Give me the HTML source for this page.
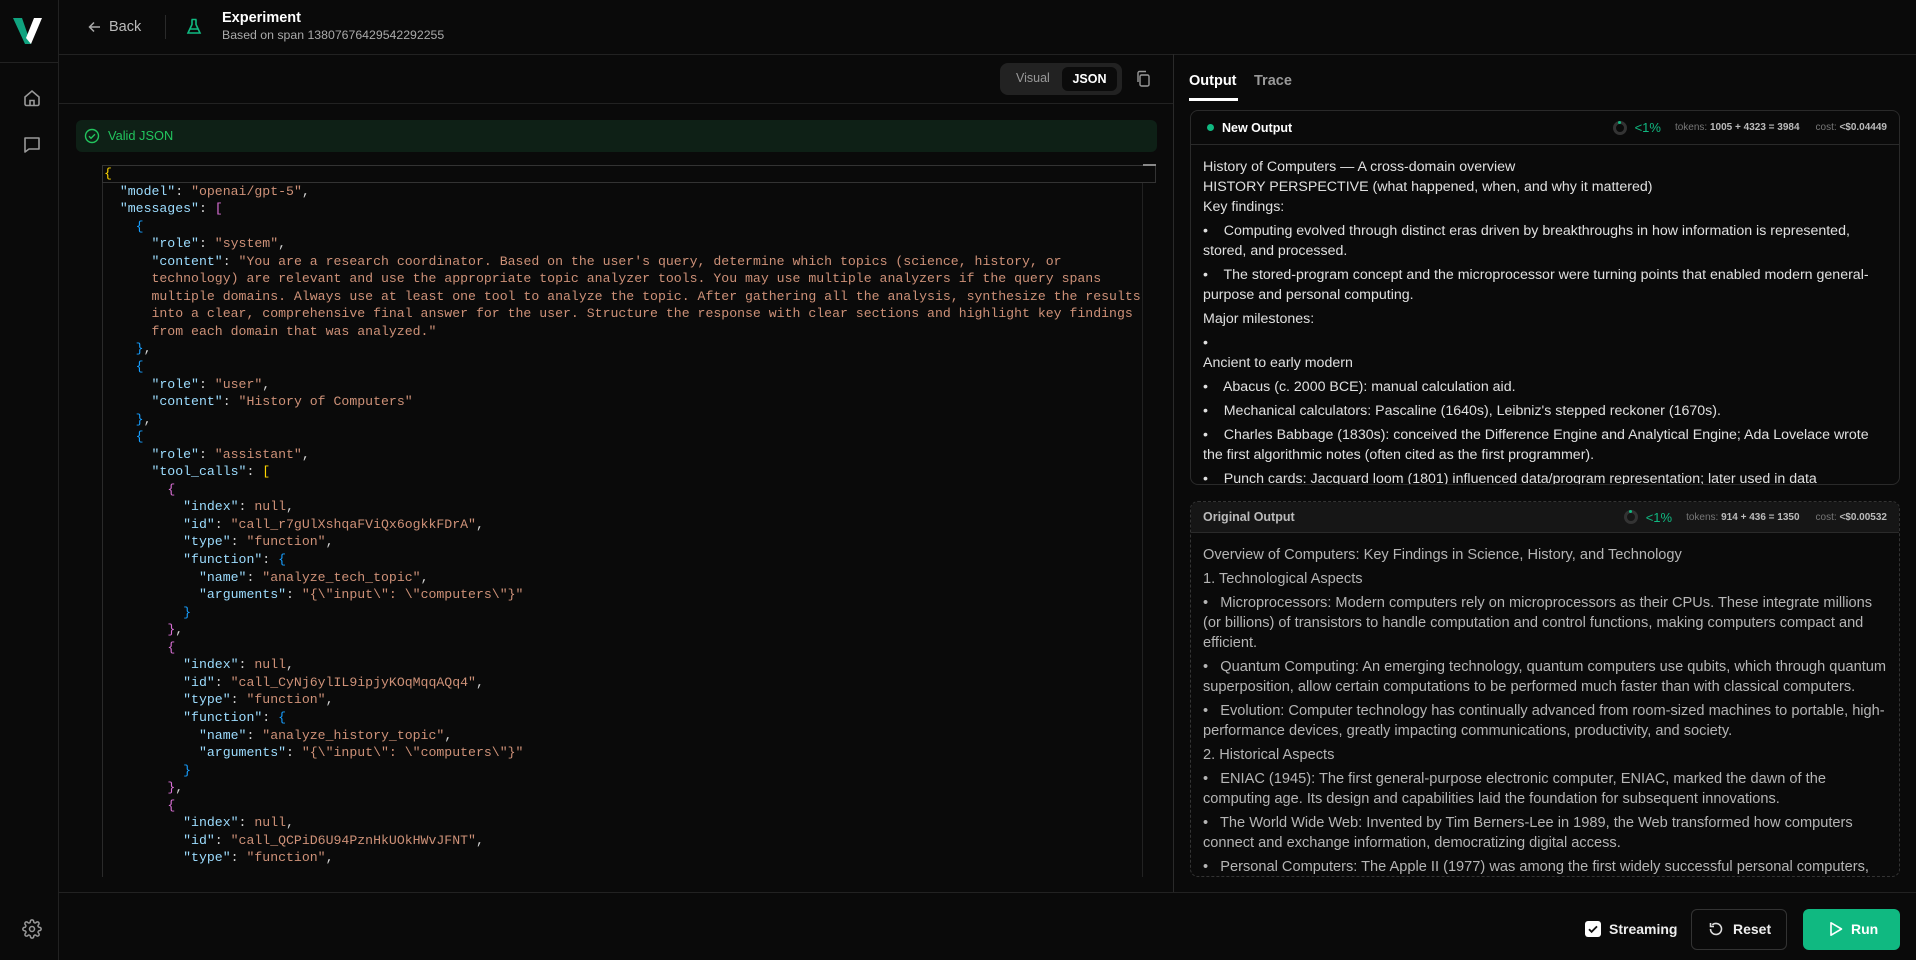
<!DOCTYPE html>
<html><head><meta charset="utf-8"><style>
*{box-sizing:border-box;margin:0;padding:0}
body{width:1916px;height:960px;background:#0a0a0a;color:#e5e5e5;font-family:"Liberation Sans",sans-serif;position:relative;overflow:hidden}
.abs{position:absolute}
.code{position:absolute;left:104px;top:165px;font-family:"Liberation Mono",monospace;font-size:13.2px;line-height:17.55px;white-space:pre;color:#d4d4d4}
.k{color:#9cdcfe}.s{color:#ce9178}.y{color:#ffd700}.p{color:#da70d6}.b{color:#179fff}
.card{position:absolute;left:1190px;width:710px;border:1px solid #2a2a2a;border-radius:8px;overflow:hidden}
.ch{height:34px;border-bottom:1px solid #2a2a2a;display:flex;align-items:center;padding:0 12px;font-size:12.5px}
.body{padding:12px 12px;font-size:14.2px;line-height:20px;color:#e0e0e0}
.body p{margin-bottom:4px}
.meta{margin-left:auto;display:flex;align-items:center;gap:8px;font-size:10px;color:#777}
.meta b{color:#bbb;font-weight:bold}
.ring{width:14px;height:14px;border-radius:50%;border:3px solid #333;position:relative}
.ring:after{content:"";position:absolute;width:3px;height:3px;background:#10b981;border-radius:50%;top:-3px;left:2.5px}
.pct{color:#10b981;font-size:13px;margin-right:6px}
</style></head><body>
<div class="abs" style="left:0;top:0;width:59px;height:960px;border-right:1px solid #222"></div>
<div class="abs" style="left:0;top:62px;width:59px;border-top:1px solid #222"></div>
<svg class="abs" style="left:12px;top:17px" width="32" height="28" viewBox="0 0 32 28"><polygon points="1,1 10,1 19,27 13,27" fill="#10a37f"/><polygon points="22,1 30,1 19,27 14,21" fill="#fff"/></svg>
<svg class="abs" style="left:22px;top:88px" width="20" height="20" viewBox="0 0 20 20" fill="none" stroke="#999" stroke-width="1.6"><path d="M3 9L10 3l7 6v7a1.5 1.5 0 0 1-1.5 1.5h-11A1.5 1.5 0 0 1 3 16z"/><path d="M8 17.5v-5h4v5"/></svg>
<svg class="abs" style="left:22px;top:135px" width="20" height="20" viewBox="0 0 20 20" fill="none" stroke="#999" stroke-width="1.6"><path d="M3 3h14v11H7l-4 3z" stroke-linejoin="round"/></svg>
<svg class="abs" style="left:22px;top:919px" width="20" height="20" viewBox="0 0 24 24" fill="none" stroke="#999" stroke-width="1.8"><circle cx="12" cy="12" r="3"/><path d="M19.4 15a1.7 1.7 0 0 0 .3 1.8l.1.1a2 2 0 1 1-2.8 2.8l-.1-.1a1.7 1.7 0 0 0-1.8-.3 1.7 1.7 0 0 0-1 1.5V21a2 2 0 1 1-4 0v-.1a1.7 1.7 0 0 0-1.1-1.5 1.7 1.7 0 0 0-1.8.3l-.1.1a2 2 0 1 1-2.8-2.8l.1-.1a1.7 1.7 0 0 0 .3-1.8 1.7 1.7 0 0 0-1.5-1H3a2 2 0 1 1 0-4h.1a1.7 1.7 0 0 0 1.5-1.1 1.7 1.7 0 0 0-.3-1.8l-.1-.1a2 2 0 1 1 2.8-2.8l.1.1a1.7 1.7 0 0 0 1.8.3H9a1.7 1.7 0 0 0 1-1.5V3a2 2 0 1 1 4 0v.1a1.7 1.7 0 0 0 1 1.5 1.7 1.7 0 0 0 1.8-.3l.1-.1a2 2 0 1 1 2.8 2.8l-.1.1a1.7 1.7 0 0 0-.3 1.8V9a1.7 1.7 0 0 0 1.5 1H21a2 2 0 1 1 0 4h-.1a1.7 1.7 0 0 0-1.5 1z"/></svg>
<div class="abs" style="left:59px;top:54px;width:1857px;border-top:1px solid #222"></div>
<svg class="abs" style="left:88px;top:20px" width="14" height="14" viewBox="0 0 14 14" fill="none" stroke="#aaa" stroke-width="1.5"><path d="M12 7H2M6 2.5L1.5 7 6 11.5"/></svg>
<div class="abs" style="left:109px;top:19px;font-size:14.5px;color:#bbb">Back</div>
<div class="abs" style="left:165px;top:15px;height:24px;border-left:1px solid #2a2a2a"></div>
<svg class="abs" style="left:186px;top:18px" width="16" height="17" viewBox="0 0 16 17" fill="none" stroke="#10b981" stroke-width="1.6"><path d="M5.5 1.5h5M6 1.5v5L2 15h12l-4-8.5v-5M3.8 11h8.4"/></svg>
<div class="abs" style="left:222px;top:10px;font-size:14.5px;font-weight:bold;color:#fff">Experiment</div>
<div class="abs" style="left:222px;top:28px;font-size:12.3px;color:#aaa">Based on span 13807676429542292255</div>
<div class="abs" style="left:59px;top:103px;width:1114px;border-top:1px solid #222"></div>
<div class="abs" style="left:1173px;top:54px;height:838px;border-left:1px solid #2a2a2a"></div>
<div class="abs" style="left:1000px;top:63px;width:122px;height:32px;background:#222;border-radius:8px"></div>
<div class="abs" style="left:1016px;top:71px;font-size:12.5px;color:#999">Visual</div>
<div class="abs" style="left:1062px;top:67px;width:55px;height:24px;background:#0b0b0b;border-radius:6px;font-size:12.5px;font-weight:bold;color:#fff;text-align:center;line-height:24px">JSON</div>
<svg class="abs" style="left:1135px;top:70px" width="16" height="18" viewBox="0 0 16 18" fill="none" stroke="#999" stroke-width="1.4"><rect x="5" y="5" width="9" height="11" rx="1.5"/><path d="M3 12V3a1.5 1.5 0 0 1 1.5-1.5H11"/></svg>
<div class="abs" style="left:76px;top:120px;width:1081px;height:32px;background:#0e2016;border-radius:6px"></div>
<svg class="abs" style="left:84px;top:128px" width="16" height="16" viewBox="0 0 16 16" fill="none" stroke="#22c55e" stroke-width="1.4"><circle cx="8" cy="8" r="6.5"/><path d="M5 8.2l2 2 4-4"/></svg>
<div class="abs" style="left:108px;top:128px;font-size:12.8px;color:#22c55e">Valid JSON</div>
<div class="abs" style="left:102px;top:165px;width:1054px;height:18px;border:1.5px solid #333"></div>
<div class="abs" style="left:1143px;top:164px;width:13px;border-top:2px solid #888"></div>
<div class="abs" style="left:1142px;top:183px;height:694px;border-left:1px solid #222"></div>
<div class="abs" style="left:102px;top:183px;height:694px;border-left:1px solid #2a2a2a"></div>
<div class="abs" style="left:0;top:0;width:1140px;height:877px;overflow:hidden">
<div class="code"><span class="y">{</span>
  <span class="k">"model"</span>: <span class="s">"openai/gpt-5"</span>,
  <span class="k">"messages"</span>: <span class="p">[</span>
    <span class="b">{</span>
      <span class="k">"role"</span>: <span class="s">"system"</span>,
      <span class="k">"content"</span>: <span class="s">"You are a research coordinator. Based on the user's query, determine which topics (science, history, or</span>
<span class="s">      technology) are relevant and use the appropriate topic analyzer tools. You may use multiple analyzers if the query spans</span>
<span class="s">      multiple domains. Always use at least one tool to analyze the topic. After gathering all the analysis, synthesize the results</span>
<span class="s">      into a clear, comprehensive final answer for the user. Structure the response with clear sections and highlight key findings</span>
<span class="s">      from each domain that was analyzed."</span>
    <span class="b">}</span>,
    <span class="b">{</span>
      <span class="k">"role"</span>: <span class="s">"user"</span>,
      <span class="k">"content"</span>: <span class="s">"History of Computers"</span>
    <span class="b">}</span>,
    <span class="b">{</span>
      <span class="k">"role"</span>: <span class="s">"assistant"</span>,
      <span class="k">"tool_calls"</span>: <span class="y">[</span>
        <span class="p">{</span>
          <span class="k">"index"</span>: <span class="s">null</span>,
          <span class="k">"id"</span>: <span class="s">"call_r7gUlXshqaFViQx6ogkkFDrA"</span>,
          <span class="k">"type"</span>: <span class="s">"function"</span>,
          <span class="k">"function"</span>: <span class="b">{</span>
            <span class="k">"name"</span>: <span class="s">"analyze_tech_topic"</span>,
            <span class="k">"arguments"</span>: <span class="s">"{\"input\": \"computers\"}"</span>
          <span class="b">}</span>
        <span class="p">}</span>,
        <span class="p">{</span>
          <span class="k">"index"</span>: <span class="s">null</span>,
          <span class="k">"id"</span>: <span class="s">"call_CyNj6ylIL9ipjyKOqMqqAQq4"</span>,
          <span class="k">"type"</span>: <span class="s">"function"</span>,
          <span class="k">"function"</span>: <span class="b">{</span>
            <span class="k">"name"</span>: <span class="s">"analyze_history_topic"</span>,
            <span class="k">"arguments"</span>: <span class="s">"{\"input\": \"computers\"}"</span>
          <span class="b">}</span>
        <span class="p">}</span>,
        <span class="p">{</span>
          <span class="k">"index"</span>: <span class="s">null</span>,
          <span class="k">"id"</span>: <span class="s">"call_QCPiD6U94PznHkUOkHWvJFNT"</span>,
          <span class="k">"type"</span>: <span class="s">"function"</span>,
</div></div>
<div class="abs" style="left:1189px;top:73px;font-size:14.5px;font-weight:bold;color:#fff">Output</div>
<div class="abs" style="left:1254px;top:73px;font-size:14.5px;font-weight:bold;color:#999">Trace</div>
<div class="abs" style="left:1189px;top:98px;width:49px;height:2.5px;background:#fff"></div>
<div class="card" style="top:110px;height:375px">
<div class="ch"><span style="width:7px;height:7px;border-radius:50%;background:#10b981;margin-right:8px;margin-left:4px"></span><span style="color:#fff;font-weight:bold">New Output</span>
<div class="meta"><span class="ring"></span><span class="pct">&lt;1%</span><span>tokens: <b>1005 + 4323 = 3984</b></span><span style="margin-left:8px">cost: <b>&lt;$0.04449</b></span></div></div>
<div class="body">
<div>History of Computers — A cross-domain overview</div>
<div>HISTORY PERSPECTIVE (what happened, when, and why it mattered)</div>
<p>Key findings:</p>
<p>•&nbsp;&nbsp;&nbsp; Computing evolved through distinct eras driven by breakthroughs in how information is represented, stored, and processed.</p>
<p>•&nbsp;&nbsp;&nbsp; The stored-program concept and the microprocessor were turning points that enabled modern general-purpose and personal computing.</p>
<p>Major milestones:</p>
<div>•</div>
<p>Ancient to early modern</p>
<p>•&nbsp;&nbsp;&nbsp; Abacus (c. 2000 BCE): manual calculation aid.</p>
<p>•&nbsp;&nbsp;&nbsp; Mechanical calculators: Pascaline (1640s), Leibniz's stepped reckoner (1670s).</p>
<p>•&nbsp;&nbsp;&nbsp; Charles Babbage (1830s): conceived the Difference Engine and Analytical Engine; Ada Lovelace wrote the first algorithmic notes (often cited as the first programmer).</p>
<p>•&nbsp;&nbsp;&nbsp; Punch cards: Jacquard loom (1801) influenced data/program representation; later used in data</p>
</div></div>
<div class="card" style="top:501px;height:376px;border:1px dashed #333">
<div class="ch" style="background:#161616;height:31px"><span style="color:#bbb;font-weight:bold">Original Output</span>
<div class="meta"><span class="ring"></span><span class="pct">&lt;1%</span><span>tokens: <b>914 + 436 = 1350</b></span><span style="margin-left:8px">cost: <b>&lt;$0.00532</b></span></div></div>
<div class="body" style="color:#b5b5b5;padding-top:12px;font-size:14.6px">
<p>Overview of Computers: Key Findings in Science, History, and Technology</p>
<p>1. Technological Aspects</p>
<p>•&nbsp;&nbsp; Microprocessors: Modern computers rely on microprocessors as their CPUs. These integrate millions (or billions) of transistors to handle computation and control functions, making computers compact and efficient.</p>
<p>•&nbsp;&nbsp; Quantum Computing: An emerging technology, quantum computers use qubits, which through quantum superposition, allow certain computations to be performed much faster than with classical computers.</p>
<p>•&nbsp;&nbsp; Evolution: Computer technology has continually advanced from room-sized machines to portable, high-performance devices, greatly impacting communications, productivity, and society.</p>
<p>2. Historical Aspects</p>
<p>•&nbsp;&nbsp; ENIAC (1945): The first general-purpose electronic computer, ENIAC, marked the dawn of the computing age. Its design and capabilities laid the foundation for subsequent innovations.</p>
<p>•&nbsp;&nbsp; The World Wide Web: Invented by Tim Berners-Lee in 1989, the Web transformed how computers connect and exchange information, democratizing digital access.</p>
<p>•&nbsp;&nbsp; Personal Computers: The Apple II (1977) was among the first widely successful personal computers, highlighting a shift toward individual computing.</p>
</div></div>
<div class="abs" style="left:59px;top:892px;width:1857px;border-top:1px solid #222"></div>
<div class="abs" style="left:1585px;top:921px;width:16px;height:16px;background:#fff;border-radius:3px"></div>
<svg class="abs" style="left:1587px;top:923px" width="12" height="12" viewBox="0 0 12 12" fill="none" stroke="#111" stroke-width="1.8"><path d="M2 6.2l2.6 2.6L10 3.4"/></svg>
<div class="abs" style="left:1609px;top:921px;font-size:14px;font-weight:bold;color:#eee">Streaming</div>
<div class="abs" style="left:1691px;top:909px;width:96px;height:41px;border:1px solid #333;border-radius:6px"></div>
<svg class="abs" style="left:1708px;top:921px" width="16" height="16" viewBox="0 0 16 16" fill="none" stroke="#ddd" stroke-width="1.6"><path d="M2.5 8a5.5 5.5 0 1 0 1.8-4.1M2.5 2v3.5H6"/></svg>
<div class="abs" style="left:1733px;top:921px;font-size:14px;font-weight:bold;color:#eee">Reset</div>
<div class="abs" style="left:1803px;top:909px;width:97px;height:41px;background:#10b981;border-radius:6px"></div>
<svg class="abs" style="left:1829px;top:921px" width="14" height="16" viewBox="0 0 14 16" fill="none" stroke="#fff" stroke-width="1.6"><path d="M2 1.8v12.4L12.5 8z" stroke-linejoin="round"/></svg>
<div class="abs" style="left:1851px;top:921px;font-size:14px;font-weight:bold;color:#fff">Run</div>
</body></html>
